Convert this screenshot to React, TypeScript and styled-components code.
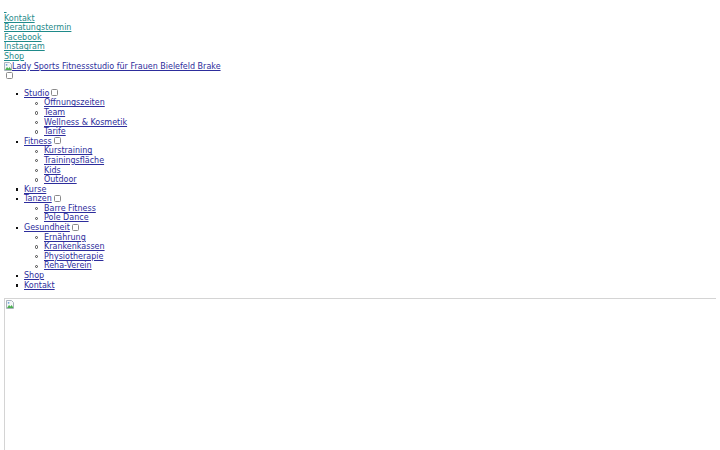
import React from 'react';
import styled, {createGlobalStyle} from "styled-components";

const GlobalStyle = createGlobalStyle`
    html {
        overflow: hidden;
    }

    body {
        margin: 4px;
        font-family: "DejaVu Sans", "Noto Sans", sans-serif;
        font-size: 8px;
        line-height: 9.6px;
        color: #000;
        background: #fff;
    }
`

const topLinks = ['Kontakt', 'Beratungstermin', 'Facebook', 'Instagram', 'Shop'];

type NavItem = {
    title: string;
    children?: string[];
};

const navItems: NavItem[] = [
    {title: 'Studio', children: ['Öffnungszeiten', 'Team', 'Wellness & Kosmetik', 'Tarife']},
    {title: 'Fitness', children: ['Kurstraining', 'Trainingsfläche', 'Kids', 'Outdoor']},
    {title: 'Kurse'},
    {title: 'Tanzen', children: ['Barre Fitness', 'Pole Dance']},
    {title: 'Gesundheit', children: ['Ernährung', 'Krankenkassen', 'Physiotherapie', 'Reha-Verein']},
    {title: 'Shop'},
    {title: 'Kontakt'},
];

// the little "image failed to load" glyph
const BrokenImage = () => (
    <svg width="8" height="9" viewBox="0 0 8 9">
        <path d="M0.5 0.5h5l2 2v6h-7z" fill="#f4f6f8" stroke="#a9b2bc"/>
        <path d="M1 8l2-3 1.5 1.5 1.2-1.5 1.8 3z" fill="#4caf50"/>
        <circle cx="2.6" cy="2.8" r="0.9" fill="#6aa3d8"/>
    </svg>
);

export default function App() {
    return (
        <>
            <GlobalStyle/>
            <Line><IconLink href="#">&nbsp;</IconLink></Line>
            {topLinks.map(t => (
                <Line key={t}><TopLink href="#">{t}</TopLink></Line>
            ))}
            <Line>
                <LogoLink href="#">
                    <BrokenImage/>
                    Lady Sports Fitnessstudio für Frauen Bielefeld Brake
                </LogoLink>
            </Line>
            <Line><Toggle/></Line>

            <Menu>
                {navItems.map(item => (
                    <MenuItem key={item.title}>
                        <NavLink href="#">{item.title}</NavLink>
                        {item.children && <Toggle/>}
                        {item.children && (
                            <SubMenu>
                                {item.children.map(c => (
                                    <SubItem key={c}><NavLink href="#">{c}</NavLink></SubItem>
                                ))}
                            </SubMenu>
                        )}
                    </MenuItem>
                ))}
            </Menu>

            <Hero>
                <HeroIcon><BrokenImage/></HeroIcon>
            </Hero>
        </>
    );
}

const Line = styled.div`
    height: 9.6px;
    display: flex;
    align-items: center;
    white-space: nowrap;
`

const IconLink = styled.a`
    color: #1f8a8a;
`

const TopLink = styled.a`
    color: #1f8a8a;
`

const LogoLink = styled.a`
    display: inline-flex;
    align-items: center;
    color: #2d2d9c;
`

const NavLink = styled.a`
    color: #2d2d9c;
`

const Toggle = styled.span`
    display: inline-block;
    box-sizing: border-box;
    width: 7px;
    height: 7px;
    margin: 0 2px;
    border: 1px solid #8a8a8a;
    border-radius: 1.5px;
    background: #fff;
    vertical-align: -0.5px;
`

const Menu = styled.ul`
    margin: 8px 0;
    padding-left: 20px;
    list-style: none;
`

const MenuItem = styled.li`
    position: relative;
    line-height: 9.6px;

    &::before {
        content: '';
        position: absolute;
        left: -8px;
        top: 3.8px;
        width: 2.4px;
        height: 2.4px;
        background: #111;
    }
`

const SubMenu = styled.ul`
    margin: 0;
    padding-left: 20px;
    list-style: none;
`

const SubItem = styled.li`
    position: relative;

    &::before {
        content: '';
        position: absolute;
        left: -9px;
        top: 3.2px;
        width: 3.4px;
        height: 3.4px;
        box-sizing: border-box;
        border: 0.8px solid #444;
        border-radius: 50%;
    }
`

/* the header photo runs off the bottom of the window, flush with its right edge */
const Hero = styled.div`
    margin-right: -4px;
    height: 400px;
    box-sizing: border-box;
    border: 1px solid #d4d4d4;
    border-right: none;
`

const HeroIcon = styled.div`
    padding: 1px 0 0 1px;
    line-height: 0;
`
